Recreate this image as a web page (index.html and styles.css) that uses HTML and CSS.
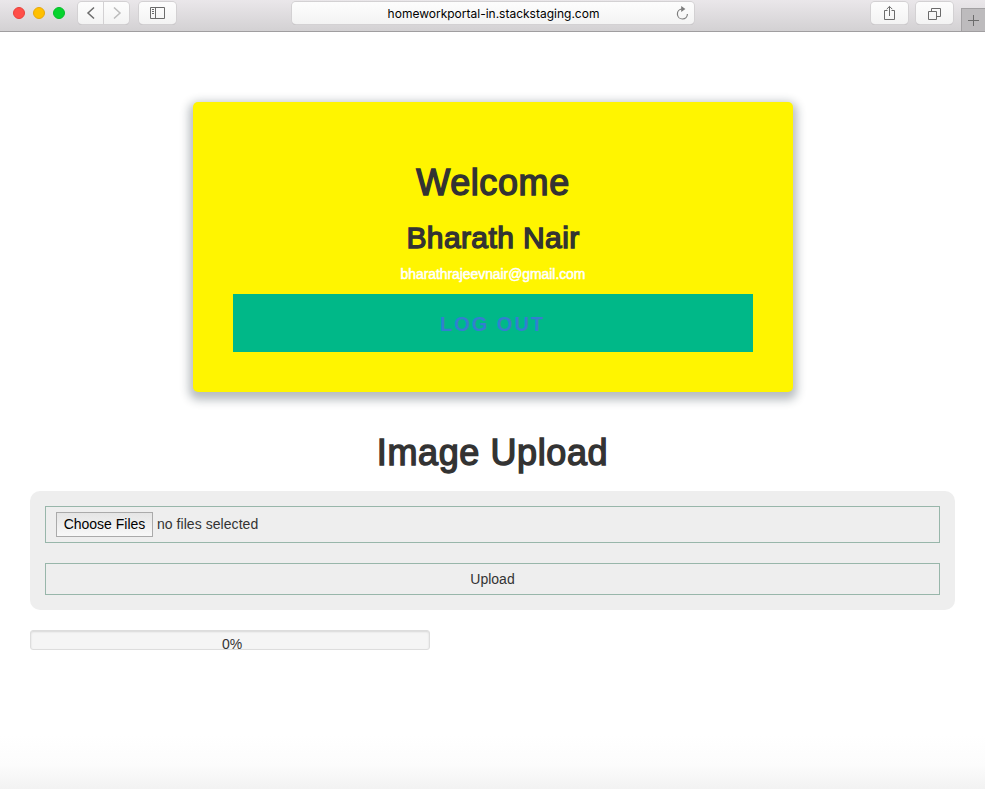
FILE: index.html
```html
<!DOCTYPE html>
<html lang="en">
<head>
<meta charset="utf-8">
<title>Homework Portal</title>
<link rel="stylesheet" href="styles.css">
</head>
<body>
<header class="toolbar">
  <div class="lights"><i class="red"></i><i class="amber"></i><i class="green"></i></div>
  <div class="nav">
    <span class="btn back"><svg width="10" height="14" viewBox="0 0 10 14"><path d="M8 1.500 2 7l6 5.500"/></svg></span>
    <span class="btn forward"><svg width="10" height="14" viewBox="0 0 10 14"><path d="m2 1.500 6 5.500-6 5.500"/></svg></span>
  </div>
  <span class="btn side"><svg width="15" height="12" viewBox="0 0 15 12"><path d="M.5.5h14v11H.5zM5.500.5v11M2 2.500h2M2 4.500h2M2 6.500h2"/></svg></span>
  <div class="btn address"><span class="url">homeworkportal-in.stackstaging.com</span>
    <svg class="reload" width="13" height="14" viewBox="0 0 13 14"><path d="M7 3H6a5 5 0 1 0 5.400 5"/><path class="solid" d="M5.200 0 9.400 3 5.200 6z"/></svg>
  </div>
  <span class="btn share"><svg width="13" height="16" viewBox="0 0 13 16"><path d="M4.500 5.500h-3v9h10v-9h-3M6.500 11V1.500M3.700 4.200l2.800-2.800 2.800 2.800"/></svg></span>
  <span class="btn tabs"><svg width="13" height="13" viewBox="0 0 13 13"><path d="M.5 4.500h8v8h-8zM3.500 4.500v-3h9v8h-4"/></svg></span>
  <span class="plus"><svg width="11" height="11" viewBox="0 0 11 11"><path d="M5.500 0v11M0 5.500h11"/></svg></span>
</header>
<main>
  <section class="card">
    <h1>Welcome</h1>
    <h2>Bharath Nair</h2>
    <p class="email">bharathrajeevnair@gmail.com</p>
    <a class="logout">LOG OUT</a>
  </section>
  <h1 class="title">Image Upload</h1>
  <form class="upload">
    <div class="files"><span class="choose">Choose Files</span><span class="none">no files selected</span></div>
    <button class="submit" type="button"><span>Upload</span></button>
  </form>
  <div class="progress"><span>0%</span></div>
</main>
</body>
</html>
```
FILE: styles.css
```css
* { box-sizing: border-box; }
body {
  margin: 0;
  height: 789px;
  overflow: hidden;
  font: 14px/20px "Liberation Sans", Arial, sans-serif;
  color: #333;
  background: linear-gradient(#fff 0, #fff 735px, #fcfcfc 765px, #f2f2f2 789px);
}
svg { display: block; fill: none; stroke: #6b6b6b; stroke-width: 1; }
.toolbar {
  display: flex;
  align-items: flex-start;
  height: 32px;
  padding-top: 2px;
  background: linear-gradient(#eae7ea, #d3d1d3);
  border-bottom: 1px solid #a09ea0;
}
.lights { display: flex; gap: 8px; margin: 5px 0 0 13px; }
.lights i { width: 12px; height: 12px; border-radius: 50%; border: 1px solid; }
.red { background: #ff4e48; border-color: #e8403b !important; }
.amber { background: #ffc000; border-color: #e6a80c !important; }
.green { background: #06d32e; border-color: #05bd28 !important; }
.btn {
  display: flex;
  align-items: center;
  justify-content: center;
  height: 22px;
  border-radius: 4px;
  background: linear-gradient(#fdfdfd, #f3f3f3);
  box-shadow: 0 0 0 1px #d3d1d3, 0 1px 0 0 #b5b3b5;
}
.nav { display: flex; gap: 1px; margin-left: 13px; }
.back, .forward { width: 25px; }
.back svg, .forward svg { stroke-width: 1.5; }
.forward svg { stroke: #bbb; }
.back { border-radius: 4px 0 0 4px; }
.forward { border-radius: 0 4px 4px 0; }
.side { width: 37px; margin-left: 10px; }
.address { width: 402px; margin-left: 116px; position: relative; }
.url { margin: 1px 0 0 1px; font: 12px/22px Inter, Roboto, sans-serif; color: #000; white-space: nowrap; }
.reload { position: absolute; right: 5px; top: 4px; stroke: #7d7d7d; stroke-width: 1.2; }
.reload .solid { fill: #7d7d7d; stroke: none; }
.share { width: 37px; margin-left: 177px; }
.tabs { width: 37px; margin-left: 8px; }
.plus {
  width: 24px;
  height: 23px;
  margin: 6px 0 0 8px;
  padding: 6px 0 0 6px;
  background: #bdbbbd;
  border: 1px solid #a3a1a3;
  border-width: 1px 0 0 1px;
}
main { padding: 70px 30px 0; }
.card {
  width: 600px;
  height: 290px;
  margin: 0 auto;
  padding: 61px 40px 40px;
  position: relative;
  left: .5px;
  background: #fff500;
  border-radius: 5px;
  box-shadow: 0 4px 10px 4px rgba(19, 35, 47, .3);
  text-align: center;
}
h1, h2 { margin: 0; font-weight: 400; -webkit-text-stroke: 1.4px #333; }
h1 { font-size: 36px; line-height: 40px; letter-spacing: .6px; }
h2 { margin-top: 18px; font-size: 30px; line-height: 33px; letter-spacing: .4px; }
.email { margin: 10px 0 10px; color: #fff; letter-spacing: -.08px; -webkit-text-stroke: .5px #fff; }
.logout {
  display: block;
  height: 58px;
  background: #00b888;
  color: #337fd0;
  font-size: 20px;
  line-height: 60px;
  font-weight: 700;
  letter-spacing: 2px;
  text-indent: -1px;
}
.title { margin-top: 41px; text-align: center; }
.upload { margin-top: 18px; height: 119px; padding: 15px; background: #eee; border-radius: 10px; }
.files { display: flex; height: 37px; padding: 5px 10px; border: 1px solid #98b6aa; }
.choose { width: 97px; height: 25px; border: 1px solid #aaa; background: linear-gradient(#e5e5e5, #f8f8f8); color: #000; line-height: 23px; text-align: center; }
.none { margin-left: 4px; line-height: 25px; letter-spacing: .05px; }
.submit { display: block; width: 100%; height: 32px; margin-top: 20px; padding: 0; border: 1px solid #98b6aa; background: none; font: inherit; color: #333; }
.progress {
  width: 400px;
  height: 20px;
  margin-top: 20px;
  padding-left: 4px;
  overflow: hidden;
  border: 1px solid #ddd;
  border-radius: 3px;
  background: #f5f5f5;
  box-shadow: inset 0 1px 2px rgba(0, 0, 0, .12);
  text-align: center;
  line-height: 27px;
}
```
